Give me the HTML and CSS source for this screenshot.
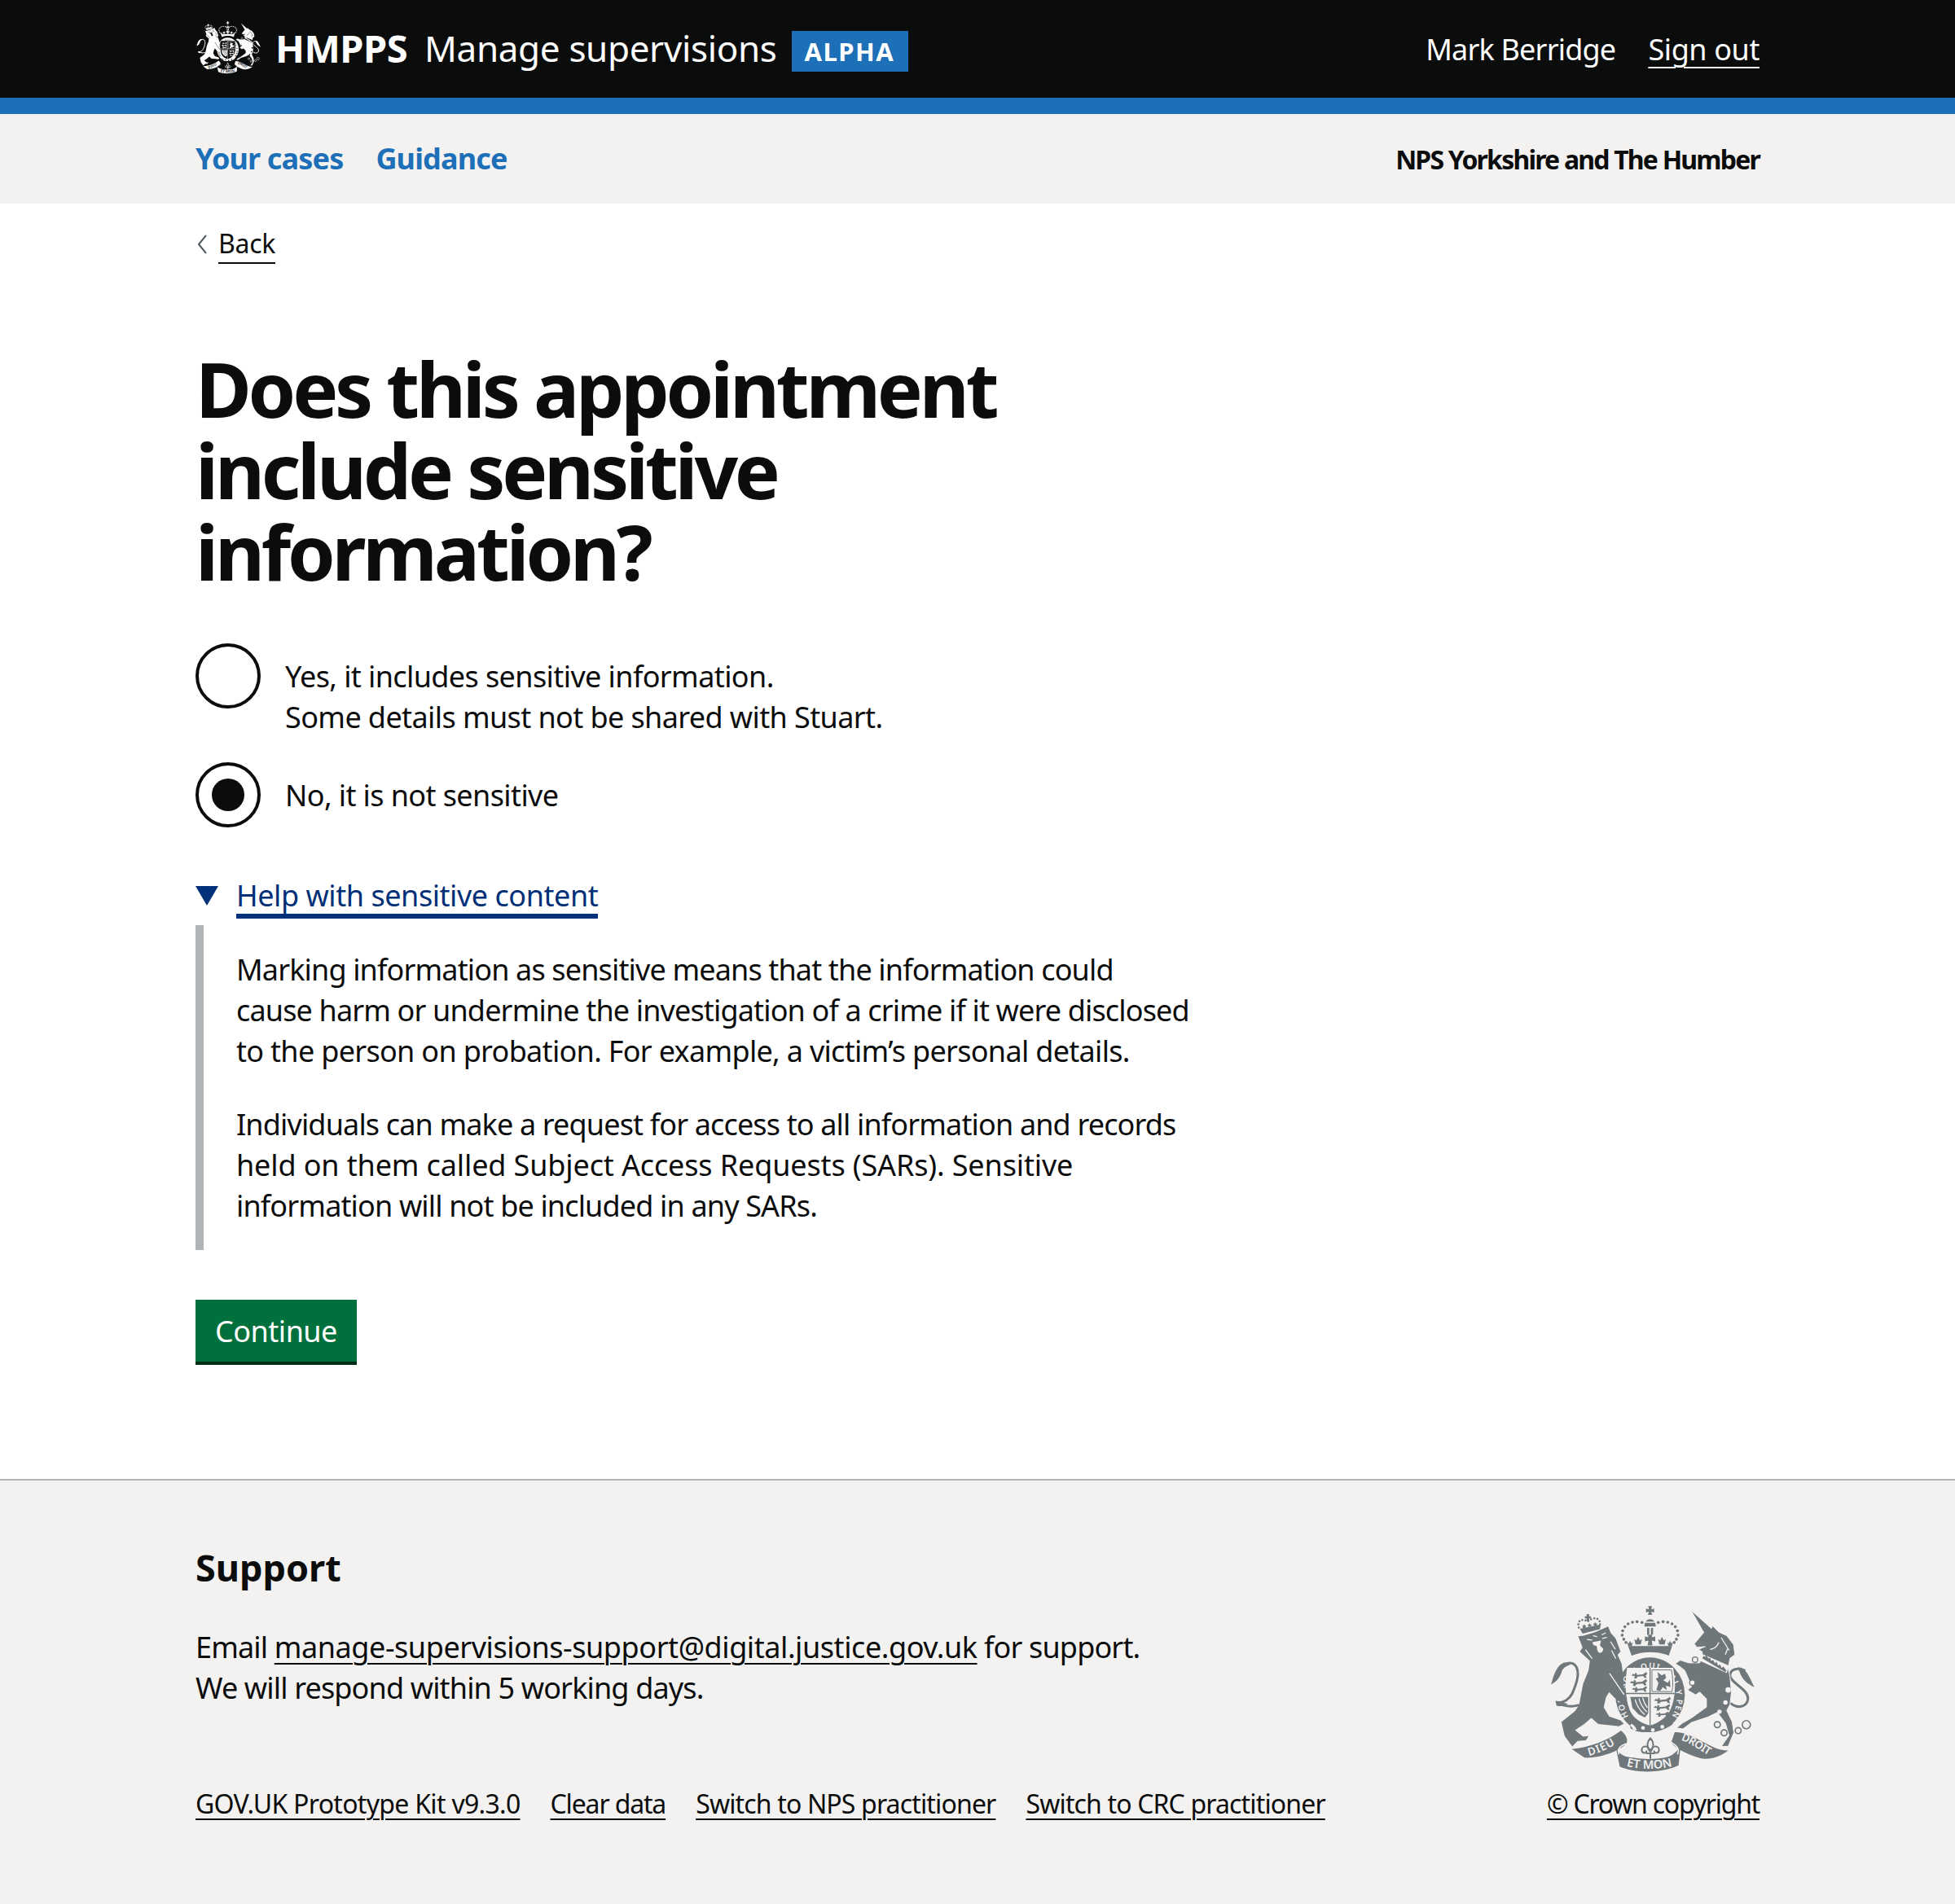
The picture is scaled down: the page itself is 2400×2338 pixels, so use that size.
FILE: index.html
```html
<!DOCTYPE html>
<html lang="en">
<head>
<meta charset="utf-8">
<title>Does this appointment include sensitive information?</title>
<link rel="stylesheet" href="styles.css">
</head>
<body>
<svg class="defs" width="0" height="0" aria-hidden="true">
  <defs>
    <path id="arc-garter" d="M297 420 A98 112 0 1 1 457 420"/>
    <path id="arc-dieu" d="M152 565 C190 555 225 538 260 516"/>
    <path id="arc-etmon" d="M290 603 C340 617 420 617 468 600"/>
    <path id="arc-droit" d="M490 507 C530 518 565 550 606 570"/>
    <path id="passant" d="M0 12 L6 6 L12 9 L14 2 L20 6 L18 10 L40 8 L52 0 L56 6 L50 12 L54 20 L46 20 L42 14 L22 16 L18 22 L10 22 L12 14 Z"/>
    <path id="fleur" d="M0 -22 L7 -8 L14 -14 L10 6 L-10 6 L-14 -14 L-7 -8 Z"/>
    <symbol id="royal-arms" viewBox="0 0 780 640">
      <!-- crown -->
      <path class="em-fill" d="M370 13 H384 L381 25 L392 22 V36 L381 33 L385 45 H369 L373 33 L362 36 V22 L373 25 Z"/>
      <path class="em-fill" d="M356 88 C356 52 398 52 398 88 Z"/>
      <path class="em-bline" d="M360 72 H394"/>
      <path class="em-fill" d="M366 93 H374 V118 H366 Z M380 93 H388 V118 H380 Z"/>
      <g class="em-fill">
        <circle cx="347" cy="73" r="5.5"/><circle cx="329" cy="70" r="5.5"/><circle cx="312" cy="72" r="5.5"/><circle cx="296" cy="78" r="5.5"/><circle cx="284" cy="89" r="5.5"/><circle cx="276" cy="104" r="5.5"/><circle cx="274" cy="120" r="5.5"/><circle cx="280" cy="135" r="5.5"/><circle cx="288" cy="147" r="5.5"/>
        <circle cx="407" cy="73" r="5.5"/><circle cx="425" cy="70" r="5.5"/><circle cx="442" cy="72" r="5.5"/><circle cx="458" cy="78" r="5.5"/><circle cx="470" cy="89" r="5.5"/><circle cx="478" cy="104" r="5.5"/><circle cx="480" cy="120" r="5.5"/><circle cx="474" cy="135" r="5.5"/><circle cx="466" cy="147" r="5.5"/>
      </g>
      <path class="em-fill" d="M369 118 H385 L383 128 L396 125 V143 L383 140 L386 158 H368 L371 140 L358 143 V125 L371 128 Z"/>
      <use class="em-fill" href="#fleur" transform="translate(333 148)"/>
      <use class="em-fill" href="#fleur" transform="translate(421 148)"/>
      <use class="em-fill" href="#fleur" transform="translate(303 156) scale(.7)"/>
      <use class="em-fill" href="#fleur" transform="translate(451 156) scale(.7)"/>
      <path class="em-fill" d="M296 160 L458 160 L446 195 C405 178 350 178 309 195 Z"/>
      <!-- garter and shield -->
      <ellipse class="em-fill" cx="377" cy="340" rx="128" ry="138"/>
      <text class="em-motto garter"><textPath href="#arc-garter" textLength="505" lengthAdjust="spacing">HONI SOIT QUI MAL Y PENSE</textPath></text>
      <path class="em-bg" d="M292 240 H462 C472 300 472 350 452 396 C432 430 402 446 377 453 C345 446 315 428 302 396 C284 350 284 300 292 240 Z"/>
      <path class="em-fill" d="M375 240 H379 V453 H375 Z M288 333 H467 V337 H288 Z"/>
      <g class="em-fill">
        <use href="#passant" transform="translate(308 256) scale(1.05)"/>
        <use href="#passant" transform="translate(302 282) scale(1.15)"/>
        <use href="#passant" transform="translate(310 308) scale(1)"/>
        <use href="#passant" transform="translate(392 348) scale(1.1)"/>
        <use href="#passant" transform="translate(390 374) scale(1.1)"/>
        <use href="#passant" transform="translate(398 402) scale(.85)"/>
        <path d="M400 322 L408 296 L398 280 L408 276 L404 256 L420 268 L432 262 L436 278 L426 286 L442 296 L450 284 L452 312 L436 306 L438 322 L424 312 L414 326 Z"/>
        <path d="M304 348 H370 V408 L358 424 L334 412 L312 388 Z"/>
      </g>
      <path class="em-line-bg" d="M384 248 H456 C462 280 462 305 458 328 H384 Z"/>
      <path class="em-bline" d="M322 358 C328 380 340 398 356 412 M336 354 C342 376 352 390 364 402 M350 352 C354 366 358 376 366 386"/>
      <path class="em-fill" d="M306 440 C345 462 410 462 450 436 L462 446 C430 478 330 490 304 462 Z"/>
      <circle class="em-bg" cx="351" cy="462" r="7"/>
      <circle class="em-bg" cx="387" cy="470" r="7"/>
      <circle class="em-bg" cx="422" cy="458" r="7"/>
      <path class="em-bg" d="M308 446 C318 452 324 458 328 470 L316 472 C312 462 308 456 304 452 Z"/>
      <!-- lion -->
      <path class="em-line" d="M112 378 C90 385 60 382 32 368 C58 372 80 355 90 335 C105 300 122 255 100 230 C85 216 60 222 48 245"/>
      <path class="em-fill" d="M62 220 C35 228 22 262 12 302 C32 292 46 275 52 252 C58 238 70 232 84 228 Z"/>
      <path class="em-fill" d="M28 362 C42 362 60 372 74 372 C62 382 44 384 32 380 Z"/>
      <path class="em-fill" d="M112 124 L132 122 L176 108 L222 88 L232 112 L250 132 L268 180 L257 192 L272 225 L276 258 L280 338 L292 352 L288 372 L268 368 L245 350 L226 330 L214 350 L206 386 L226 420 L268 434 L280 446 L262 456 L230 452 L186 448 L160 425 L136 446 L100 470 L130 494 L150 492 L140 508 L110 510 L90 530 L62 492 L50 440 L100 400 L115 378 L130 300 L150 250 L155 215 L118 180 L128 165 L120 145 Z"/>
      <path class="em-bline" d="M228 262 L280 338"/>
      <path class="em-bline" d="M180 125 L168 122 M200 118 L212 112 M146 136 L162 138 M202 132 L216 128 M232 145 L248 170 M236 178 L250 205 M140 175 L162 205"/>
      <path class="em-bg" d="M164 146 L196 140 L192 158 L204 170 C204 188 186 190 182 174 L180 160 L168 156 Z"/>
      <!-- lion crown -->
      <path class="em-dots" d="M114 92 C106 62 130 58 147 70 C165 52 196 52 192 84"/>
      <path class="em-fill" d="M143 42 H152 V50 H159 V58 H152 V68 H143 V58 H136 V50 H143 Z"/>
      <use class="em-fill" href="#fleur" transform="translate(134 90) scale(.5)"/>
      <use class="em-fill" href="#fleur" transform="translate(154 86) scale(.5)"/>
      <use class="em-fill" href="#fleur" transform="translate(175 82) scale(.5)"/>
      <path class="em-fill" d="M118 96 L195 80 L192 98 L128 114 Z"/>
      <!-- unicorn -->
      <path class="em-line" d="M675 372 C700 392 735 385 738 355 C740 320 680 300 672 272 C670 245 700 238 725 250"/>
      <path class="em-fill" d="M700 238 C732 238 746 280 762 312 C735 300 716 282 708 258 Z"/>
      <path class="em-fill em-sep" d="M528 28 L603 95 L608 85 L630 108 L660 122 L685 155 L690 192 L672 205 L665 240 L672 275 L677 330 L672 375 L660 398 L680 440 L686 480 L665 530 L640 530 L668 490 L655 445 L625 405 L590 422 L530 442 L498 466 L475 462 L495 445 L530 425 L585 385 L585 355 L560 330 L545 340 L515 322 L530 310 L520 285 L505 250 L490 238 L470 225 L488 212 L520 222 L560 222 L568 198 L570 182 L556 172 L580 162 L550 165 L540 152 L575 110 Z"/>
      <path class="em-bline" d="M600 172 C615 170 625 160 630 148 M640 130 L668 175 M655 190 L662 172"/>
      <path class="em-bg" d="M562 186 L668 232 L660 260 L560 214 Z"/>
      <path class="em-fill" d="M570 206 L574 196 L580 200 L584 192 L592 206 L598 202 L602 214 L610 212 L616 224 L622 218 L628 232 L636 228 L640 240 L648 236 L658 250 L655 256 Z"/>
      <circle class="em-ring-bg" cx="543" cy="210" r="10"/>
      <circle class="em-ring-bg" cx="533" cy="295" r="10"/>
      <circle class="em-bg" cx="665" cy="322" r="10"/>
      <circle class="em-bg" cx="655" cy="368" r="8"/>
      <circle class="em-bg" cx="633" cy="402" r="8"/>
      <circle class="em-ring" cx="625" cy="450" r="11"/>
      <circle class="em-ring" cx="650" cy="480" r="11"/>
      <circle class="em-ring" cx="702" cy="472" r="11"/>
      <circle class="em-ring" cx="732" cy="450" r="15"/>
      <!-- motto -->
      <path class="em-fill" d="M88 540 C150 535 220 510 270 472 C290 490 296 505 290 520 C260 550 190 575 135 572 Z"/>
      <path class="em-fill" d="M252 540 C270 565 290 570 315 572 C360 580 410 578 445 568 C465 560 480 545 490 525 L482 600 C420 630 320 630 265 605 Z"/>
      <path class="em-fill" d="M468 478 C510 475 560 510 605 530 C625 540 645 545 665 545 C640 565 605 580 565 575 C520 560 470 540 455 515 Z"/>
      <path class="em-gap" d="M290 520 C262 530 256 540 262 560 M455 515 C478 530 486 540 478 560"/>
      <text class="em-motto ribbon"><textPath href="#arc-dieu">DIEU</textPath></text>
      <text class="em-motto ribbon ribbon-mid"><textPath href="#arc-etmon" textLength="174" lengthAdjust="spacing">ET MON</textPath></text>
      <text class="em-motto ribbon"><textPath href="#arc-droit" textLength="120" lengthAdjust="spacing">DROIT</textPath></text>
      <!-- fleur-de-lis -->
      <path class="em-line thin" d="M378 500 C364 515 364 535 378 550 C392 535 392 515 378 500 Z M378 550 C370 522 346 528 346 544 C348 558 362 556 364 548 M378 550 C386 522 410 528 410 544 C408 558 394 556 392 548 M364 556 H392 M378 556 V574"/>
    </symbol>
  </defs>
</svg>

<header class="site-header">
  <div class="container header-inner">
    <a class="logo" href="#">
      <svg class="logo-arms" aria-hidden="true"><use href="#royal-arms"/></svg>
      <span class="logo-org">HMPPS</span>
      <span class="logo-service">Manage supervisions</span>
      <strong class="phase-tag">ALPHA</strong>
    </a>
    <div class="header-user">
      <span class="user-name">Mark Berridge</span>
      <a class="sign-out" href="#">Sign out</a>
    </div>
  </div>
</header>

<nav class="primary-nav">
  <div class="container nav-inner">
    <ul class="nav-list">
      <li><a class="nav-link" href="#">Your cases</a></li>
      <li><a class="nav-link" href="#">Guidance</a></li>
    </ul>
    <span class="nav-team">NPS Yorkshire and The Humber</span>
  </div>
</nav>

<div class="container">
  <a class="back-link" href="#">
    <svg class="back-chevron" viewBox="0 0 12 24" aria-hidden="true"><path d="M11 1 L2 12 L11 23"/></svg>
    <span class="back-text">Back</span>
  </a>

  <main class="main">
    <h1 class="heading">Does this appointment include sensitive information?</h1>

    <div class="radios">
      <label class="radio">
        <span class="radio-mark"></span>
        <span class="radio-label">Yes, it includes sensitive information.<br>Some details must not be shared with Stuart.</span>
      </label>
      <label class="radio">
        <span class="radio-mark radio-mark-on"></span>
        <span class="radio-label">No, it is not sensitive</span>
      </label>
    </div>

    <div class="details">
      <div class="details-summary">
        <span class="details-arrow"></span>
        <span class="details-title">Help with sensitive content</span>
      </div>
      <div class="details-body">
        <p class="details-para">Marking information as sensitive means that the information could<br>cause harm or undermine the investigation of a crime if it were disclosed<br><span class="line-mid">to the person on probation. For example, a victim’s personal details.</span></p>
        <p class="details-para">Individuals can make a request for access to all information and records<br><span class="line-loose">held on them called Subject Access Requests (SARs). Sensitive</span><br>information will not be included in any SARs.</p>
      </div>
    </div>

    <button class="button" type="button">Continue</button>
  </main>
</div>

<footer class="site-footer">
  <div class="container footer-inner">
    <div class="footer-main">
      <h2 class="footer-heading">Support</h2>
      <p class="footer-text">Email <a class="footer-link" href="#">manage-supervisions-support@digital.justice.gov.uk</a> for support.<br>We will respond within 5 working days.</p>
      <ul class="footer-meta">
        <li><a class="meta-link meta-kit" href="#">GOV.UK Prototype Kit v9.3.0</a></li>
        <li><a class="meta-link meta-clear" href="#">Clear data</a></li>
        <li><a class="meta-link" href="#">Switch to NPS practitioner</a></li>
        <li><a class="meta-link" href="#">Switch to CRC practitioner</a></li>
      </ul>
    </div>
    <div class="footer-crown">
      <svg class="footer-arms" aria-hidden="true"><use href="#royal-arms"/></svg>
      <a class="meta-link crown-link" href="#">© Crown copyright</a>
    </div>
  </div>
</footer>
</body>
</html>
```
FILE: styles.css
```css
* { box-sizing: border-box; }

html, body { margin: 0; padding: 0; }

body {
  background: #fff;
  color: #0b0c0c;
  font-family: "Noto Sans", "Liberation Sans", sans-serif;
  font-size: 36px;
  line-height: 50px;
}

a { color: inherit; }

ul { list-style: none; margin: 0; padding: 0; }

.defs { position: absolute; }

.container { width: 1920px; margin: 0 auto; }

/* Royal arms */
.em-fill { fill: currentColor; }
.em-bg { fill: var(--em-bg); }
.em-sep { stroke: var(--em-bg); stroke-width: 3; }
.em-line { fill: none; stroke: currentColor; stroke-width: 9; stroke-linecap: round; }
.em-line.thin { stroke-width: 6; }
.em-line-bg { fill: none; stroke: currentColor; stroke-width: 3; }
.em-gap { fill: none; stroke: var(--em-bg); stroke-width: 5; }
.em-bline { fill: none; stroke: var(--em-bg); stroke-width: 4; stroke-linecap: round; }
.em-ring { fill: none; stroke: currentColor; stroke-width: 5; }
.em-ring-bg { fill: var(--em-bg); stroke: currentColor; stroke-width: 4; }
.em-dots { fill: none; stroke: currentColor; stroke-width: 8; stroke-linecap: round; stroke-dasharray: 0 12; }
.em-motto { fill: var(--em-bg); font-family: "Noto Sans", sans-serif; font-weight: 600; }
.em-motto.garter { font-size: 30px; }
.em-motto.ribbon { font-size: 40px; letter-spacing: 3px; }
.em-motto.ribbon-mid { font-size: 44px; }

/* Header */
.site-header {
  background: #0b0c0c;
  border-bottom: 20px solid #1d70b8;
  color: #fff;
  height: 140px;
}

.header-inner {
  height: 120px;
  display: flex;
  align-items: center;
  justify-content: space-between;
}

.logo {
  display: flex;
  align-items: center;
  color: #fff;
  text-decoration: none;
}

.logo-arms {
  --em-bg: #0b0c0c;
  color: #fff;
  width: 82px;
  height: 67px;
  margin: 0 16px 3px 0;
}

.logo-org {
  font-size: 47px;
  font-weight: 700;
  margin-right: 21px;
  letter-spacing: -0.5px;
  padding-bottom: 2px;
}

.logo-service {
  font-size: 44px;
  margin-right: 18px;
  letter-spacing: -0.35px;
  padding-bottom: 3px;
}

.phase-tag {
  background: #1d70b8;
  color: #fff;
  font-size: 31px;
  font-weight: 700;
  line-height: 50px;
  height: 50px;
  margin-top: 6px;
  padding: 0 17px 0 16px;
  letter-spacing: 1.5px;
}

.header-user {
  display: flex;
  gap: 40px;
  font-size: 36px;
  padding-top: 2px;
}

.user-name { letter-spacing: -0.8px; }

.sign-out {
  color: #fff;
  letter-spacing: -0.4px;
  text-decoration: underline;
  text-decoration-thickness: 2px;
  text-underline-offset: 8px;
}

/* Nav */
.primary-nav {
  background: #f3f2f1;
  height: 110px;
}

.nav-inner {
  height: 110px;
  display: flex;
  align-items: center;
  justify-content: space-between;
}

.nav-list { display: flex; gap: 40px; }

.nav-link {
  color: #1d70b8;
  font-size: 36px;
  font-weight: 700;
  letter-spacing: -0.85px;
  text-decoration: none;
}

.nav-team {
  font-size: 32px;
  font-weight: 700;
  letter-spacing: -1.8px;
  padding-top: 2px;
}

/* Back */
.back-link {
  display: flex;
  width: fit-content;
  align-items: center;
  gap: 14px;
  margin: 25px 0 0 2px;
  height: 50px;
  text-decoration: none;
}

.back-chevron {
  width: 12px;
  height: 24px;
  fill: none;
  stroke: #505a5f;
  stroke-width: 2;
}

.back-text {
  font-size: 32px;
  letter-spacing: -0.3px;
  line-height: 46px;
  border-bottom: 2px solid #0b0c0c;
}

/* Main */
.main { padding-bottom: 140px; }

.heading {
  font-size: 94px;
  line-height: 100px;
  font-weight: 700;
  letter-spacing: -4.2px;
  margin: 102px 0 63px;
  width: 1100px;
}

.radios { display: flex; flex-direction: column; gap: 30px; }

.radio { display: flex; align-items: flex-start; gap: 30px; }

.radio-mark {
  flex: none;
  width: 80px;
  height: 80px;
  border: 4px solid #0b0c0c;
  border-radius: 50%;
  background: #fff;
  display: flex;
  align-items: center;
  justify-content: center;
}

.radio-mark-on::after {
  content: "";
  width: 40px;
  height: 40px;
  border-radius: 50%;
  background: #0b0c0c;
}

.radio-label { padding-top: 16px; letter-spacing: -0.6px; }

.details { margin-top: 61px; }

.details-summary { display: flex; color: #003078; }

.details-arrow {
  width: 0;
  height: 0;
  margin: 11px 22px 0 0;
  border-left: 14px solid transparent;
  border-right: 14px solid transparent;
  border-top: 24px solid #003078;
}

.details-title {
  line-height: 46px;
  height: 51px;
  letter-spacing: -0.45px;
  border-bottom: 6px solid #003078;
}

.details-body {
  margin-top: 8px;
  border-left: 10px solid #b1b4b6;
  padding: 30px 0 29px 40px;
}

.details-para { margin: 0 0 40px; letter-spacing: -0.85px; }
.details-para:last-child { margin-bottom: 0; }
.line-mid { letter-spacing: -0.69px; }
.line-loose { letter-spacing: -0.13px; }

.button {
  display: block;
  margin-top: 61px;
  height: 80px;
  width: 198px;
  padding: 2px 0 0;
  border: 0;
  border-bottom: 4px solid #002d18;
  background: #00703c;
  color: #fff;
  font-family: inherit;
  font-size: 36px;
  letter-spacing: -0.5px;
  line-height: 50px;
}

/* Footer */
.site-footer {
  background: #f3f2f1;
  border-top: 2px solid #b1b4b6;
  height: 522px;
}

.footer-inner {
  display: flex;
  justify-content: space-between;
  align-items: flex-end;
  height: 417px;
}

.footer-heading {
  font-size: 45px;
  line-height: 60px;
  font-weight: 700;
  margin: 0 0 43px;
}

.footer-text { margin: 0 0 97px; letter-spacing: -0.85px; }

.footer-link {
  letter-spacing: -0.43px;
  text-decoration: underline;
  text-decoration-thickness: 2px;
  text-underline-offset: 6px;
}

.footer-meta {
  display: flex;
  gap: 37px;
  font-size: 32px;
  line-height: 40px;
}

.meta-link {
  font-size: 32px;
  line-height: 40px;
  letter-spacing: -0.85px;
  text-decoration: underline;
  text-decoration-thickness: 2px;
  text-underline-offset: 6px;
}

.meta-kit { letter-spacing: -0.7px; }
.meta-clear { letter-spacing: -1.15px; }
.crown-link { letter-spacing: -1.25px; }

.footer-crown {
  display: flex;
  flex-direction: column;
  align-items: flex-end;
}

.footer-arms {
  --em-bg: #f3f2f1;
  color: #6f777b;
  width: 260px;
  height: 213px;
  margin-bottom: 14px;
}
```
